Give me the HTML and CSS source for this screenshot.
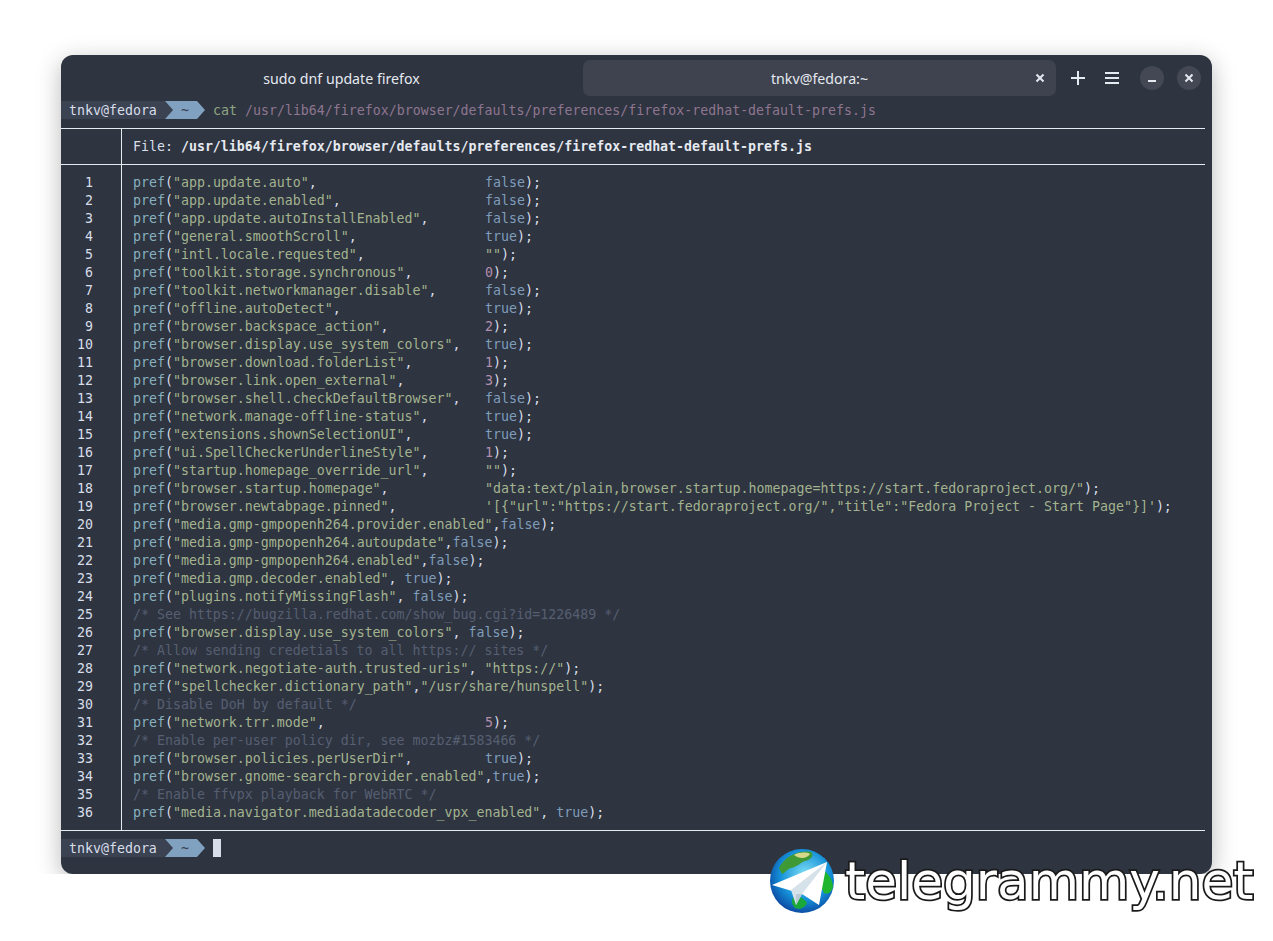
FILE: index.html

```html
<!DOCTYPE html>
<html lang="en">
<head>
  <meta charset="UTF-8" />
  <title>tnkv@fedora:~</title>
  <link rel="stylesheet" href="styles.css">
</head>
<body>

<div class="window">
  <div class="titlebar">
    <div class="tab">sudo dnf update firefox</div>
    <div class="tab tab-active">
      tnkv@fedora:~
      <svg class="tab-close" width="10" height="10" viewBox="0 0 10 10"><path d="M1.5 1.5l7 7M8.5 1.5l-7 7" /></svg>
    </div>
    <svg class="btn-plus" width="16" height="16" viewBox="0 0 16 16"><path d="M8 1v14M1 8h14" /></svg>
    <svg class="btn-menu" width="16" height="14" viewBox="0 0 16 14"><path d="M1 2h14M1 7h14M1 12h14" /></svg>
    <div class="btn-round">
      <svg width="10" height="10" viewBox="0 0 10 10"><path d="M1 8h8" /></svg>
    </div>
    <div class="btn-round btn-round-last">
      <svg width="10" height="10" viewBox="0 0 10 10"><path d="M1.5 1.5l7 7M8.5 1.5l-7 7" /></svg>
    </div>
  </div>

  <div class="terminal">
    <div class="prompt">
      <span class="seg-host">tnkv@fedora</span>
      <span class="seg-dir">~</span>
      <span class="cmd">cat</span>
      <span class="cmd-path">/usr/lib64/firefox/browser/defaults/preferences/firefox-redhat-default-prefs.js</span>
    </div>

    <div class="bat">
      <div class="bat-head">
        <div class="gutter"></div>
        <div class="file">File: <b>/usr/lib64/firefox/browser/defaults/preferences/firefox-redhat-default-prefs.js</b></div>
      </div>
      <div class="bat-body">
        <div class="gutter nums">
          1<br>2<br>3<br>4<br>5<br>6<br>7<br>8<br>9<br>10<br>11<br>12<br>13<br>14<br>15<br>16<br>17<br>18<br>19<br>20<br>21<br>22<br>23<br>24<br>25<br>26<br>27<br>28<br>29<br>30<br>31<br>32<br>33<br>34<br>35<br>36
        </div>
        <div class="code">
          <div><span class="key"><i>pref</i>(<s>"app.update.auto"</s>,</span><u>false</u>);</div>
          <div><span class="key"><i>pref</i>(<s>"app.update.enabled"</s>,</span><u>false</u>);</div>
          <div><span class="key"><i>pref</i>(<s>"app.update.autoInstallEnabled"</s>,</span><u>false</u>);</div>
          <div><span class="key"><i>pref</i>(<s>"general.smoothScroll"</s>,</span><u>true</u>);</div>
          <div><span class="key"><i>pref</i>(<s>"intl.locale.requested"</s>,</span><s>""</s>);</div>
          <div><span class="key"><i>pref</i>(<s>"toolkit.storage.synchronous"</s>,</span><em>0</em>);</div>
          <div><span class="key"><i>pref</i>(<s>"toolkit.networkmanager.disable"</s>,</span><u>false</u>);</div>
          <div><span class="key"><i>pref</i>(<s>"offline.autoDetect"</s>,</span><u>true</u>);</div>
          <div><span class="key"><i>pref</i>(<s>"browser.backspace_action"</s>,</span><em>2</em>);</div>
          <div><span class="key"><i>pref</i>(<s>"browser.display.use_system_colors"</s>,</span><u>true</u>);</div>
          <div><span class="key"><i>pref</i>(<s>"browser.download.folderList"</s>,</span><em>1</em>);</div>
          <div><span class="key"><i>pref</i>(<s>"browser.link.open_external"</s>,</span><em>3</em>);</div>
          <div><span class="key"><i>pref</i>(<s>"browser.shell.checkDefaultBrowser"</s>,</span><u>false</u>);</div>
          <div><span class="key"><i>pref</i>(<s>"network.manage-offline-status"</s>,</span><u>true</u>);</div>
          <div><span class="key"><i>pref</i>(<s>"extensions.shownSelectionUI"</s>,</span><u>true</u>);</div>
          <div><span class="key"><i>pref</i>(<s>"ui.SpellCheckerUnderlineStyle"</s>,</span><em>1</em>);</div>
          <div><span class="key"><i>pref</i>(<s>"startup.homepage_override_url"</s>,</span><s>""</s>);</div>
          <div><span class="key"><i>pref</i>(<s>"browser.startup.homepage"</s>,</span><s>"data:text/plain,browser.startup.homepage=https://start.fedoraproject.org/"</s>);</div>
          <div><span class="key"><i>pref</i>(<s>"browser.newtabpage.pinned"</s>,</span><s>'[{"url":"https://start.fedoraproject.org/","title":"Fedora Project - Start Page"}]'</s>);</div>
          <div><i>pref</i>(<s>"media.gmp-gmpopenh264.provider.enabled"</s>,<u>false</u>);</div>
          <div><i>pref</i>(<s>"media.gmp-gmpopenh264.autoupdate"</s>,<u>false</u>);</div>
          <div><i>pref</i>(<s>"media.gmp-gmpopenh264.enabled"</s>,<u>false</u>);</div>
          <div><i>pref</i>(<s>"media.gmp.decoder.enabled"</s>, <u>true</u>);</div>
          <div><i>pref</i>(<s>"plugins.notifyMissingFlash"</s>, <u>false</u>);</div>
          <div class="comment">/* See https://bugzilla.redhat.com/show_bug.cgi?id=1226489 */</div>
          <div><i>pref</i>(<s>"browser.display.use_system_colors"</s>, <u>false</u>);</div>
          <div class="comment">/* Allow sending credetials to all https:// sites */</div>
          <div><i>pref</i>(<s>"network.negotiate-auth.trusted-uris"</s>, <s>"https://"</s>);</div>
          <div><i>pref</i>(<s>"spellchecker.dictionary_path"</s>,<s>"/usr/share/hunspell"</s>);</div>
          <div class="comment">/* Disable DoH by default */</div>
          <div><span class="key"><i>pref</i>(<s>"network.trr.mode"</s>,</span><em>5</em>);</div>
          <div class="comment">/* Enable per-user policy dir, see mozbz#1583466 */</div>
          <div><span class="key"><i>pref</i>(<s>"browser.policies.perUserDir"</s>,</span><u>true</u>);</div>
          <div><i>pref</i>(<s>"browser.gnome-search-provider.enabled"</s>,<u>true</u>);</div>
          <div class="comment">/* Enable ffvpx playback for WebRTC */</div>
          <div><i>pref</i>(<s>"media.navigator.mediadatadecoder_vpx_enabled"</s>, <u>true</u>);</div>
        </div>
      </div>
    </div>

    <div class="prompt">
      <span class="seg-host">tnkv@fedora</span>
      <span class="seg-dir">~</span>
      <span class="cursor"></span>
    </div>
  </div>
</div>

<div class="watermark">
  <svg width="66" height="66" viewBox="0 0 66 66">
    <defs>
      <radialGradient id="sea" cx="0.55" cy="0.4" r="0.65">
        <stop offset="0" stop-color="#7fe0f5" />
        <stop offset="0.6" stop-color="#1590d8" />
        <stop offset="1" stop-color="#0a3f9a" />
      </radialGradient>
    </defs>
    <circle cx="33" cy="33" r="32" fill="url(#sea)" />
    <path d="M10 20C16 8 30 2 42 4c4 3 0 8-6 9-5 2-8 6-14 7-4 1-6 5-9 6z" fill="#3f9a35" />
    <path d="M25 7c5-3 13-3 16-1-2 4-10 6-16 1z" fill="#d8d88a" />
    <path d="M52 22c6 1 11 8 12 16-1 6-5 9-9 7-2-6-6-8-5-14 0-4 0-7 2-9z" fill="#1fb52e" />
    <path d="M24 50c5-3 11 0 14 5-2 5-8 7-12 5-3-3-4-7-2-10z" fill="#1aa83a" />
    <path d="M3 37L58 14 50 57 33 46z" fill="#ffffff" />
    <path d="M22 42L58 14 33 46 27 57z" fill="#d6e2ea" />
    <path d="M33 46l-6 11 0-11z" fill="#b9cad6" />
  </svg>
  <span class="watermark-text">telegrammy.net</span>
</div>

</body>
</html>
```

FILE: styles.css

```css
body {
  margin: 0;
  background: #ffffff;
}
.window {
  width: 1151px;
  height: 819px;
  margin: 55px 0 0 61px;
  background: #2e3440;
  border-radius: 12px;
  box-shadow: 0 6px 24px rgba(0,0,0,0.28);
  overflow: hidden;
}

/* title bar */
.titlebar {
  display: flex;
  align-items: center;
  gap: 5px;
  height: 46px;
  padding-left: 44px;
  box-sizing: border-box;
  color: #e5e9f0;
  font-family: "Noto Sans", sans-serif;
  font-size: 14.2px;
}
.titlebar svg path {
  fill: none;
  stroke: #e5e9f0;
  stroke-width: 2;
}
.tab {
  position: relative;
  width: 473px;
  height: 36px;
  line-height: 37px;
  text-align: center;
  border-radius: 7px;
  margin-top: -1px;
}
.tab-active {
  background: #3e434f;
}
.tab-close {
  position: absolute;
  right: 11px;
  top: 13px;
}
.btn-plus {
  margin-left: 9px;
  margin-top: -1px;
}
.btn-menu {
  margin-left: 13px;
  margin-top: -1px;
}
.btn-round {
  display: flex;
  align-items: center;
  justify-content: center;
  width: 24px;
  height: 24px;
  margin-left: 15px;
  border-radius: 50%;
  background: #434854;
  margin-top: -1px;
}
.btn-round-last {
  margin-left: 8px;
}

/* terminal */
.terminal {
  font-family: "DejaVu Sans Mono", "Liberation Mono", monospace;
  font-size: 13.28px;
  line-height: 18px;
  color: #d8dee9;
}
.prompt {
  display: flex;
  height: 18px;
  line-height: 20px;
  white-space: pre;
}
.seg-host {
  width: 112px;
  box-sizing: border-box;
  padding-left: 8px;
  background: #3b4252;
  clip-path: polygon(0 0, 104px 0, 100% 50%, 104px 100%, 0 100%);
}
.seg-dir {
  width: 40px;
  margin-left: -8px;
  text-align: center;
  color: #3b4252;
  background: #81a1c1;
  clip-path: polygon(0 0, 32px 0, 100% 50%, 32px 100%, 0 100%, 8px 50%);
}
.cmd {
  margin-left: 8px;
  color: #8fa583;
}
.cmd-path {
  margin-left: 8px;
  color: #8f7690;
}
.cursor {
  width: 8px;
  margin-left: 8px;
  background: #d8dee9;
}

/* bat output */
.bat {
  margin: 9px 7px 8px 0;
  border-top: 1px solid #e5e9f0;
  border-bottom: 1px solid #e5e9f0;
}
.bat-head {
  display: flex;
  height: 35px;
  border-bottom: 1px solid #e5e9f0;
}
.bat-body {
  display: flex;
}
.gutter {
  width: 60px;
  flex: none;
  border-right: 1px solid #e5e9f0;
}
.file {
  padding: 9px 0 0 11px;
}
.file b {
  color: #e5e9f0;
}
.nums {
  box-sizing: content-box;
  width: 32px;
  padding: 9px 28px 8px 0;
  text-align: right;
}
.code {
  padding: 9px 0 8px 11px;
}
.code div {
  white-space: pre;
}
.key {
  display: inline-block;
  width: 352px;
}
.code i {
  font-style: normal;
  color: #88b1bf;
}
.code s {
  text-decoration: none;
  color: #a3b38f;
}
.code u {
  text-decoration: none;
  color: #7f9dbb;
}
.code em {
  font-style: normal;
  color: #b48ead;
}
.comment {
  color: #565f72;
}

/* site mark laid over the corner */
.watermark {
  position: absolute;
  left: 769px;
  top: 848px;
  display: flex;
  align-items: center;
  gap: 10px;
}
.watermark-text {
  font-family: "DejaVu Sans", sans-serif;
  font-size: 51.6px;
  line-height: 66px;
  color: #ffffff;
  -webkit-text-stroke: 3.5px #1a1a1a;
  paint-order: stroke fill;
}
```
